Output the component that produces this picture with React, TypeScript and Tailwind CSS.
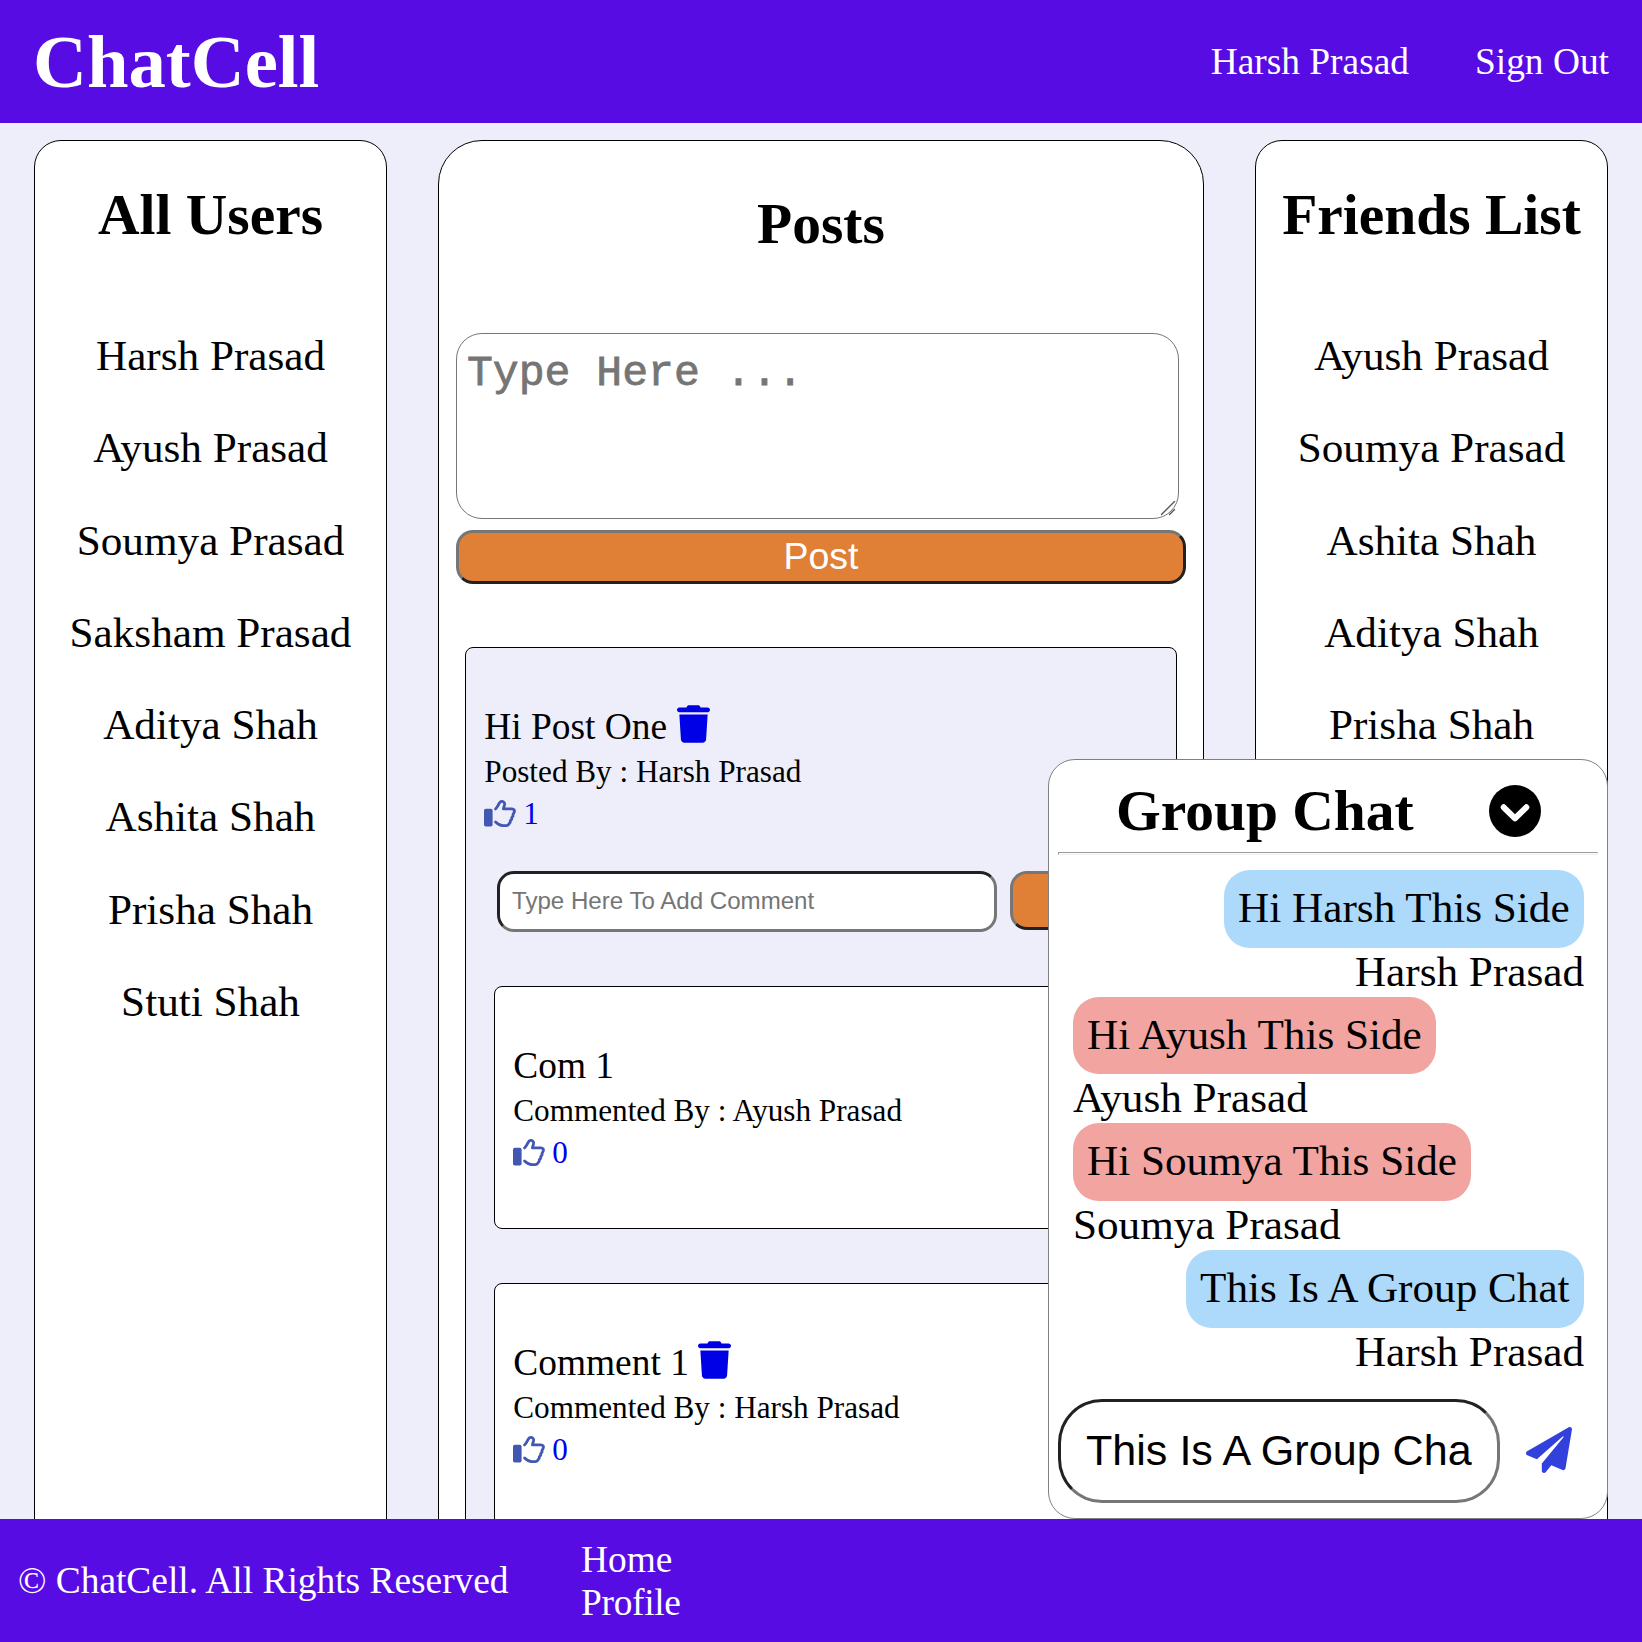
import { FaTrash } from "react-icons/fa6";
import { FaPaperPlane } from "react-icons/fa";

const users = [
  "Harsh Prasad",
  "Ayush Prasad",
  "Soumya Prasad",
  "Saksham Prasad",
  "Aditya Shah",
  "Ashita Shah",
  "Prisha Shah",
  "Stuti Shah",
];

const friends = ["Ayush Prasad", "Soumya Prasad", "Ashita Shah", "Aditya Shah", "Prisha Shah"];

const messages = [
  { text: "Hi Harsh This Side", from: "Harsh Prasad", mine: true },
  { text: "Hi Ayush This Side", from: "Ayush Prasad", mine: false },
  { text: "Hi Soumya This Side", from: "Soumya Prasad", mine: false },
  { text: "This Is A Group Chat", from: "Harsh Prasad", mine: true },
];

const comments = [
  { text: "Com 1", by: "Ayush Prasad", own: false },
  { text: "Comment 1", by: "Harsh Prasad", own: true },
];

function ThumbsUp() {
  return (
    <svg className="h-[28px] w-[33px]" viewBox="0 0 33 28" fill="none">
      <rect x="0" y="8.8" width="8.6" height="17.7" rx="1.8" fill="#4257b2" />
      <path
        d="M11.6 8.9c1.5-1 2.4-3.3 3.5-5.4.9-1.700 1.700-2.300 3.200-2.100 1.800.3 2.600 1.800 2.200 3.500l-1.100 4h8.500c2.100 0 3 1.500 2.300 3.200l-1.300 2.700.1 1.400-1.300 1.500v1.600l-1.400 1.400-.1 1.700-1 1.200c-.6 1.500-1.400 2.100-3.200 2.100h-3.200c-2.900 0-5-1.500-7.200-3.700"
        stroke="#4257b2"
        strokeWidth="2.8"
        strokeLinecap="round"
        strokeLinejoin="round"
      />
    </svg>
  );
}

function ChevronCircle() {
  return (
    <svg className="mt-[7px] h-[52px] w-[52px]" viewBox="0 0 52 52" fill="none">
      <circle cx="26" cy="26" r="26" fill="#000" />
      <path d="M14.7 22.3 26 33.400l11.300-11.100" stroke="#fff" strokeWidth="6" strokeLinecap="round" strokeLinejoin="round" />
    </svg>
  );
}

function Likes({ count }: { count: number }) {
  return (
    <div className="flex h-10 items-start gap-[6px] text-[31.2px] leading-10 text-[#0000ee]">
      <span className="mt-[6px]">
        <ThumbsUp />
      </span>
      {count}
    </div>
  );
}

function EntryBody({ text, byline, own, likes }: { text: string; byline: string; own: boolean; likes: number }) {
  return (
    <div className="pl-[18.3px]">
      <div className="flex text-[37.4px] leading-[44px]">
        {text}
        {own && <FaTrash className="ml-[9.5px] h-[38px] w-[33px] text-[#0000e6]" />}
      </div>
      <div className="text-[31.2px] leading-[45px]">{byline}</div>
      <Likes count={likes} />
    </div>
  );
}

function People({ title, names }: { title: string; names: string[] }) {
  return (
    <section className="h-[1500px] w-[353px] shrink-0 rounded-[27px] border border-black bg-white pt-[41px] text-center">
      <h2 className="text-[57.5px] leading-[66px] font-bold whitespace-nowrap">{title}</h2>
      <ul className="mt-[62px]">
        {names.map((n) => (
          <li key={n} className="text-[43.2px] leading-[92.3px]">
            {n}
          </li>
        ))}
      </ul>
    </section>
  );
}

function Header() {
  return (
    <header className="flex h-[123px] shrink-0 items-center justify-between bg-[#570ce4] px-[33px] pt-[2px] text-white">
      <h1 className="-mt-[2px] text-[74.7px] leading-[121px] font-bold">ChatCell</h1>
      <nav className="flex gap-[66px] text-[37.4px]">
        <span>Harsh Prasad</span>
        <span>Sign Out</span>
      </nav>
    </header>
  );
}

function Posts() {
  return (
    <section className="h-[1500px] w-[766px] shrink-0 rounded-[44px] border border-black bg-white px-[17px] pt-[50px]">
      <h2 className="text-center text-[57.5px] leading-[66px] font-bold">Posts</h2>
      <div className="relative mt-[76px] h-[186px] w-[723px]">
        <textarea
          className="block h-full w-full resize-none overflow-hidden rounded-[26px] border border-[#767676] bg-white pt-[15px] pl-[10px] font-['Liberation_Mono',monospace] text-[43.1px] leading-[49px] placeholder:text-[#757575] placeholder:opacity-100 placeholder:[-webkit-text-stroke:0.8px_#757575]"
          placeholder="Type Here ..."
        />
        <svg className="absolute right-[3px] bottom-[3px] h-4 w-4" viewBox="0 0 16 16" stroke="#555" strokeWidth="1.4" strokeLinecap="round">
          <path d="M1.5 14.5 14.5 1.5M9.5 14.5l5-5" />
        </svg>
      </div>
      <button className="mt-[11px] block h-[54px] w-[730px] rounded-[17px] border-3 border-t-[#767676] border-r-[#212121] border-b-[#212121] border-l-[#767676] bg-[#df8036] pb-[2px] font-['Liberation_Sans',sans-serif] text-[37.5px] leading-[45px] text-white">
        Post
      </button>
      <article className="mt-[63px] ml-[9px] h-[1000px] w-[712px] rounded-lg border border-black bg-[#edeefa] pt-[57px]">
        <EntryBody text="Hi Post One" byline="Posted By : Harsh Prasad" own likes={1} />
        <div className="mt-[37px] ml-[31px] flex gap-[13px]">
          <input
            className="h-[61px] w-[500px] rounded-[17px] border-3 border-t-[#212121] border-r-[#767676] border-b-[#767676] border-l-[#212121] bg-white pb-[2px] pl-3 font-['Liberation_Sans',sans-serif] text-[24.1px] placeholder:text-[#757575] placeholder:opacity-100"
            placeholder="Type Here To Add Comment"
          />
          <button className="h-[59px] w-[140px] rounded-[17px] border-3 border-t-[#767676] border-r-[#212121] border-b-[#212121] border-l-[#767676] bg-[#df8036] font-['Liberation_Sans',sans-serif] text-2xl text-white">
            Post
          </button>
        </div>
        <div className="mt-[54px] ml-7 flex flex-col gap-[54px]">
          {comments.map((c) => (
            <div key={c.text} className="h-[243px] w-[655px] shrink-0 rounded-lg border border-black bg-white pt-[57px]">
              <EntryBody text={c.text} byline={`Commented By : ${c.by}`} own={c.own} likes={0} />
            </div>
          ))}
        </div>
      </article>
    </section>
  );
}

function GroupChat() {
  return (
    <aside className="absolute right-[34px] bottom-0 flex h-[760px] w-[560px] flex-col rounded-[27px] border border-[#808080] bg-white px-[9px]">
      <div className="mt-[18px] flex h-[66px] items-start pl-[58px]">
        <h2 className="w-[373px] text-[57.5px] leading-[66px] font-bold">Group Chat</h2>
        <ChevronCircle />
      </div>
      <div className="mt-[8px] h-[3px] border border-t-[#999] border-r-[#eee] border-b-[#eee] border-l-[#999]" />
      <div className="mt-[15px] px-[14px] text-[43.2px] leading-[49px]">
        {messages.map((m) => (
          <div key={m.text} className={m.mine ? "flex flex-col items-end" : "flex flex-col items-start pl-px"}>
            <div
              className={
                m.mine
                  ? "h-[77.7px] rounded-[26px] bg-[#add9fb] px-[14.4px] pt-[13px]"
                  : "h-[77.7px] rounded-[26px] bg-[#f2a4a1] px-[14px] pt-[13px]"
              }
            >
              {m.text}
            </div>
            <div className="h-[49px] leading-[47px]">{m.from}</div>
          </div>
        ))}
      </div>
      <div className="mt-[22px] flex items-center">
        <div className="flex h-[104px] w-[442px] items-center rounded-[44px] border-3 border-t-[#212121] border-r-[#767676] border-b-[#767676] border-l-[#212121] bg-white px-[25px]">
          <input
            className="w-full bg-transparent font-['Liberation_Sans',sans-serif] text-[43.1px] outline-none"
            defaultValue="This Is A Group Cha"
          />
        </div>
        <FaPaperPlane className="-mt-[2px] ml-[26px] h-[46px] w-[46px] text-[#3341dc]" />
      </div>
    </aside>
  );
}

function Footer() {
  return (
    <footer className="flex h-[123px] shrink-0 items-center bg-[#570ce4] pl-[18px] text-[37.4px] leading-[43px] text-white">
      <p className="w-[563px]">© ChatCell. All Rights Reserved</p>
      <ul>
        <li>Home</li>
        <li className="tracking-[-0.3px]">Profile</li>
      </ul>
    </footer>
  );
}

export default function App() {
  return (
    <div className="flex h-screen w-full flex-col overflow-hidden bg-[#edeefa] font-['Liberation_Serif',serif] text-black">
      <Header />
      <main className="relative flex min-h-0 flex-1 justify-between overflow-hidden px-[34px] pt-[17px]">
        <People title="All Users" names={users} />
        <Posts />
        <People title="Friends List" names={friends} />
        <GroupChat />
      </main>
      <Footer />
    </div>
  );
}
